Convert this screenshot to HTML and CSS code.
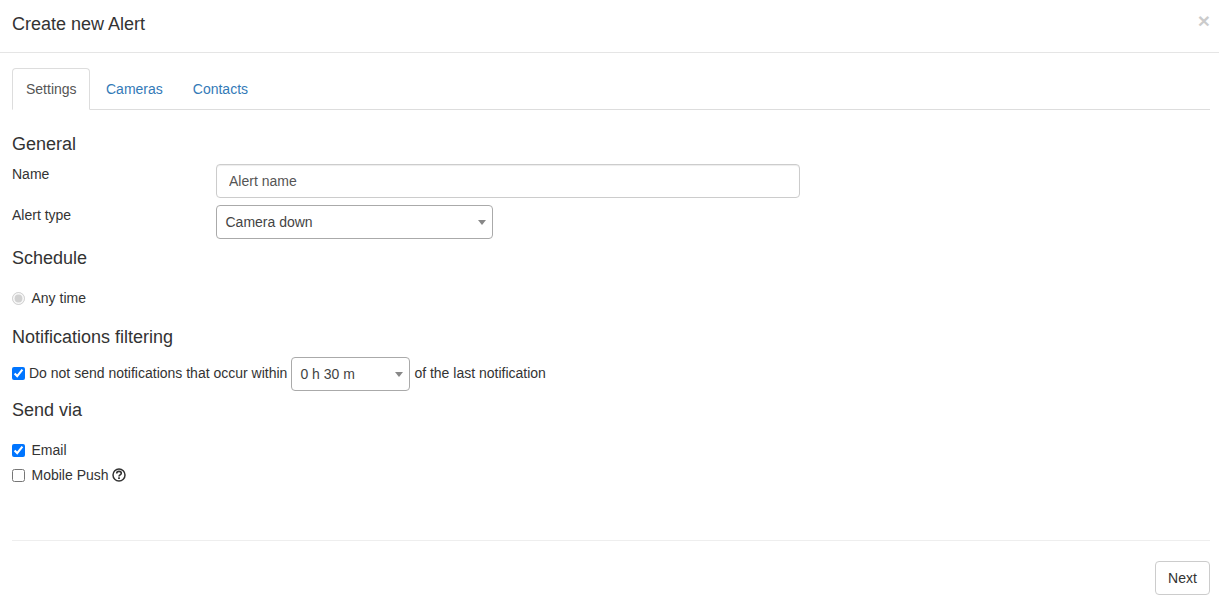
FILE: index.html
```html
<!DOCTYPE html>
<html lang="en">
<head>
<meta charset="utf-8">
<title>Create new Alert</title>
<link rel="stylesheet" href="styles.css">
</head>
<body>
<header class="modal-header">
  <h1 class="modal-title">Create new Alert</h1>
  <span class="close">×</span>
</header>
<main class="modal-body">
  <nav class="tabs">
    <a class="tab active">Settings</a>
    <a class="tab">Cameras</a>
    <a class="tab">Contacts</a>
  </nav>
  <h2 class="section general">General</h2>
  <div class="form-row">
    <label class="form-label">Name</label>
    <input class="text-input" type="text" placeholder="Alert name">
  </div>
  <div class="form-row type-row">
    <label class="form-label">Alert type</label>
    <div class="select type-select"><span>Camera down</span><i class="caret"></i></div>
  </div>
  <h2 class="section schedule">Schedule</h2>
  <label class="option any-time"><input class="radio" type="radio" checked disabled><span>Any time</span></label>
  <h2 class="section filtering">Notifications filtering</h2>
  <div class="filter-row">
    <input class="check tight" type="checkbox" checked>
    <span>Do not send notifications that occur within</span>
    <div class="select time-select"><span>0 h 30 m</span><i class="caret"></i></div>
    <span>of the last notification</span>
  </div>
  <h2 class="section send">Send via</h2>
  <label class="option email"><input class="check" type="checkbox" checked><span>Email</span></label>
  <label class="option push"><input class="check" type="checkbox"><span>Mobile Push</span>
    <svg class="help" viewBox="0 0 14 14" width="14" height="14" aria-hidden="true">
      <circle cx="7" cy="7" r="6" fill="none" stroke="#333" stroke-width="1.5"/>
      <path d="M4.7 5.6C4.7 4.2 5.7 3.4 7 3.4c1.3 0 2.3.8 2.3 1.9 0 1.7-2.3 1.6-2.3 3.2" fill="none" stroke="#333" stroke-width="1.6"/>
      <rect x="6.1" y="9.3" width="1.8" height="1.7" fill="#333"/>
    </svg>
  </label>
  <hr class="divider">
  <div class="footer"><button class="btn" type="button">Next</button></div>
</main>
</body>
</html>
```

FILE: styles.css
```css
* { box-sizing: border-box; }
html, body { margin: 0; padding: 0; }
body {
  background: #fff;
  color: #333;
  font-family: "Liberation Sans", Arial, sans-serif;
  font-size: 14px;
  line-height: 20px;
  height: 608px;
  overflow: hidden;
}
.modal-header {
  height: 53px;
  border-bottom: 1px solid #e5e5e5;
  padding: 14px 9px 0 12px;
  display: flex;
  justify-content: space-between;
  align-items: flex-start;
}
.modal-title { margin: 0; font-size: 18px; font-weight: 400; line-height: 20px; }
.close {
  font-size: 21px;
  font-weight: 700;
  line-height: 13px;
  color: #000;
  opacity: .2;
  text-shadow: 0 1px 0 #fff;
}
.modal-body { padding: 15px 9px 0 12px; }
.tabs { display: flex; height: 42px; border-bottom: 1px solid #ddd; }
.tab {
  height: 42px;
  padding: 10px 13px 10px 15px;
  color: #337ab7;
  border: 1px solid transparent;
  border-radius: 4px 4px 0 0;
}
.tab.active {
  width: 78px;
  padding: 10px 13px;
  color: #555;
  background: #fff;
  border-color: #ddd #ddd #fff;
}
.section { margin: 0; font-size: 18px; font-weight: 400; line-height: 20px; }
.general { margin-top: 24px; margin-bottom: 10px; }
.schedule { margin-top: 9px; }
.filtering { margin-top: 19px; }
.send { margin-top: 9px; }
.form-row { display: flex; align-items: flex-start; }
.type-row { margin-top: 7px; }
.form-label { width: 204px; flex: none; }
.text-input {
  width: 584px;
  height: 34px;
  padding: 6px 12px;
  border: 1px solid #ccc;
  border-radius: 4px;
  color: #555;
  font: inherit;
  box-shadow: inset 0 1px 1px rgba(0, 0, 0, .075);
}
.text-input::placeholder { color: #555; opacity: 1; }
.select {
  position: relative;
  height: 34px;
  padding: 6px 20px 6px 8.5px;
  border: 1px solid #aaa;
  border-radius: 4px;
  background: #fff;
  color: #444;
  flex: none;
}
.type-select { width: 277px; }
.time-select { width: 119px; margin: 0 4px 0 4px; padding-left: 8px; }
.caret {
  position: absolute;
  right: 6px;
  top: 14px;
  border-style: solid;
  border-width: 5px 4px 0;
  border-color: #888 transparent transparent;
}
.option { display: flex; align-items: center; height: 20px; }
.any-time { margin-top: 20px; }
.email { margin-top: 20px; }
.push { margin-top: 5px; }
.radio, .check { width: 13px; height: 13px; margin: 0 6.5px 0 0; flex: none; }
.filter-row { display: flex; align-items: center; height: 34px; margin-top: 10px; }
.check.tight { margin: 0 4px 2px 0; }
.filter-row > span { position: relative; top: -1px; }
.help { margin-left: 3.5px; margin-bottom: 1px; }
.divider { margin: 55px 0 0; border: 0; border-top: 1px solid #eee; }
.footer { display: flex; justify-content: flex-end; margin-top: 20px; }
.btn {
  width: 55px;
  height: 34px;
  padding: 0;
  border: 1px solid #ccc;
  border-radius: 4px;
  background: #fff;
  color: #333;
  font: inherit;
}
```
